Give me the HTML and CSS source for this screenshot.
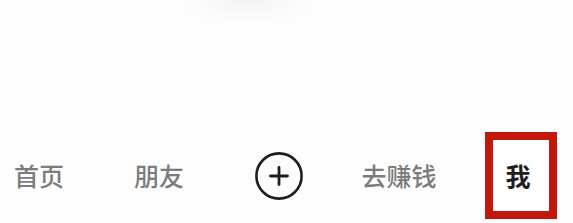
FILE: index.html
```html
<!DOCTYPE html>
<html lang="zh-CN">
<head>
<meta charset="utf-8">
<link rel="stylesheet" href="styles.css">
</head>
<body>
<div class="screen">
  <nav class="tabbar">
    <div class="tab">首页</div>
    <div class="tab">朋友</div>
    <div class="tab">
      <svg class="plus" width="48" height="48" viewBox="0 0 48 48">
        <circle cx="24" cy="24" r="22.6" fill="none" stroke="#1e1e1e" stroke-width="2.6"/>
        <path d="M24 15.5V32.5M15.5 24H32.5" stroke="#1e1e1e" stroke-width="2.8" stroke-linecap="round"/>
      </svg>
    </div>
    <div class="tab">去赚钱</div>
    <div class="tab">
      <div class="highlight"><span class="active">我</span></div>
    </div>
  </nav>
</div>
</body>
</html>
```
FILE: styles.css
```css
html, body {
  margin: 0;
  padding: 0;
}
body {
  width: 573px;
  height: 223px;
  overflow: hidden;
  background-color: #fdfdfd;
  background-image: radial-gradient(ellipse 66px 24px at 248px 0px, #f2f2f2 0%, #f8f8f8 45%, #fdfdfd 100%);
  background-repeat: no-repeat;
  font-family: "Noto Sans CJK SC", "Noto Sans", sans-serif;
}
.screen {
  height: 223px;
  display: flex;
  flex-direction: column;
  justify-content: flex-end;
}
.tabbar {
  display: grid;
  grid-template-columns: repeat(5, 120px);
  align-items: center;
  height: 87px;
  padding-bottom: 4px;
  margin-left: -21px;
}
.tab {
  display: flex;
  justify-content: center;
  align-items: center;
  font-size: 25px;
  font-weight: 500;
  color: #7c7c7c;
  line-height: 1;
}
.plus {
  display: block;
}
.highlight {
  box-sizing: border-box;
  width: 72px;
  height: 87px;
  border: 8px solid #c3170b;
  margin-left: 4px;
  display: flex;
  justify-content: center;
  align-items: center;
  padding-right: 6px;
  background: #ffffff;
}
.active {
  color: #1f1f1f;
  font-weight: 700;
  font-size: 25px;
}
```
